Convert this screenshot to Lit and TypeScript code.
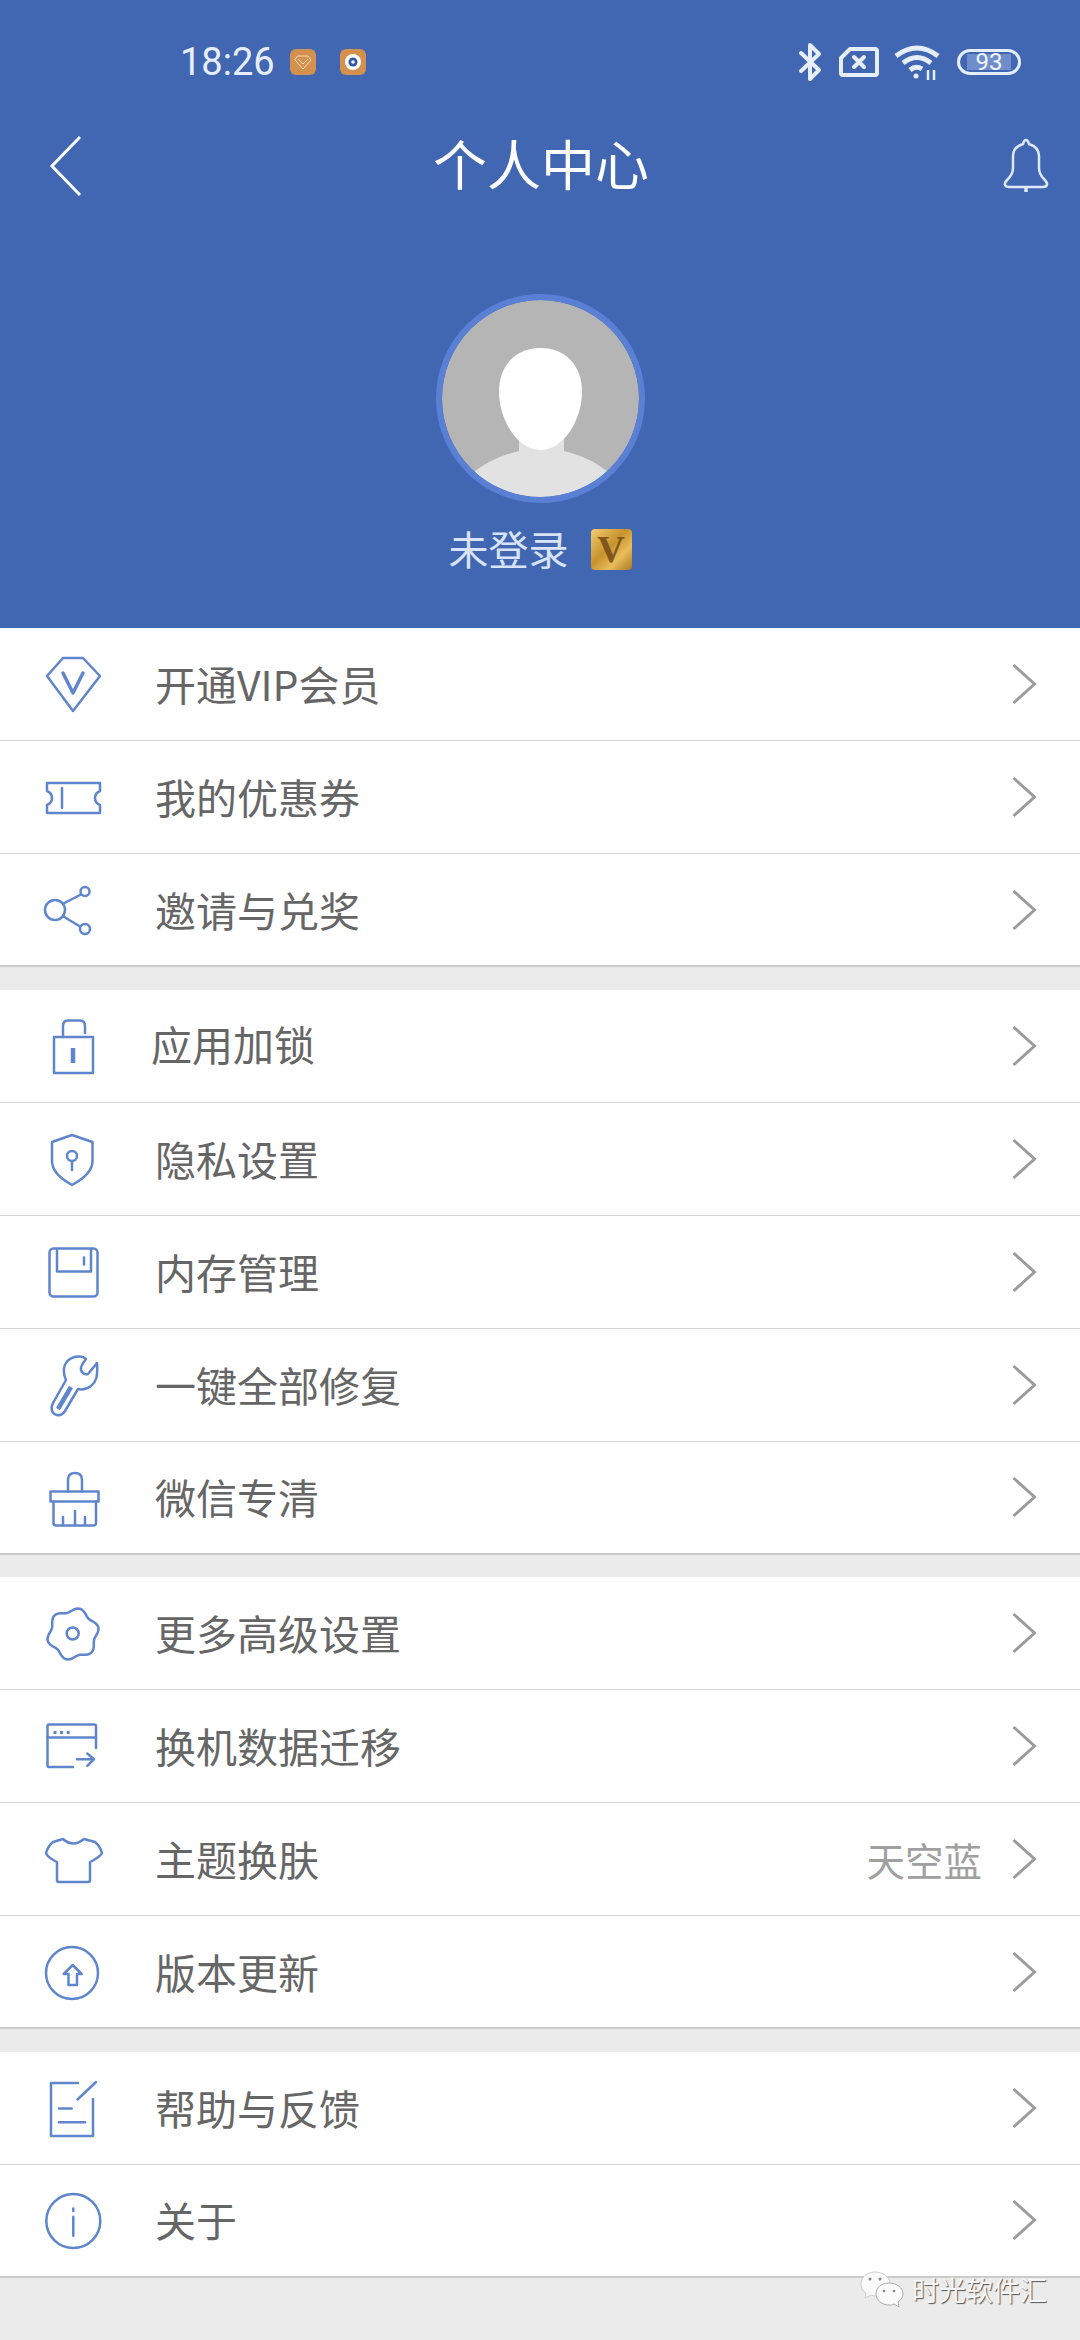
import { LitElement, css, html, svg } from 'lit';
import { customElement } from 'lit/decorators.js';

// six soft lobes, same outline as the app's "advanced settings" cog
function gearPath(): string {
  const pts: string[] = [];
  for (let deg = 0; deg < 360; deg += 5) {
    const a = (deg * Math.PI) / 180;
    const r = 24 + 2.2 * Math.cos(6 * (a + (75 * Math.PI) / 180));
    pts.push(`${(41 + r * Math.cos(a)).toFixed(1)} ${(41 + r * Math.sin(a)).toFixed(1)}`);
  }
  return `M${pts.join('L')}Z`;
}

const icons = {
  vip: svg`<path d="M31 14H51L68 32L41 67L15 32Z"/><path class="bold" d="M31 29L41 49L51 29"/>`,
  ticket: svg`<path d="M15 26H68V34Q63 36 63 41T68 48V56H15V48Q20 46 20 41T15 34Z"/><path d="M30 31V51"/>`,
  share: svg`<circle cx="23" cy="40" r="10"/><circle cx="53" cy="21.5" r="4.5"/><circle cx="53" cy="59" r="5"/><path d="M31.5 33.5L49 24.5M31.5 46.5L48 56.5"/>`,
  lock: svg`<path d="M22 31H61V67H22Z"/><path d="M31 31V20Q31 14.5 36 14.5H48Q53 14.5 53 20V27"/><path class="bar" d="M41 42V57"/>`,
  shield: svg`<path d="M40 16L60.5 23V42Q60.5 55 40 66Q20 55 20 42V23Z"/><circle cx="40" cy="37" r="5"/><path d="M40 42V51"/>`,
  disk: svg`<rect x="17.5" y="16.5" width="48" height="48" rx="4"/><path d="M25 17V39.5H59V17"/><path d="M52 25.5V32.5"/>`,
  wrench: svg`<path d="M48 11.5C38 11 31 18 32 27C32 31 33 33 34 35L21 58C18 64 20 69 25 70C29 71 31 69 33 66L46 44C50 45 55 44 59 41C64 37 66 32 65 18L56 29C53 30 50 28 49 25C48 22 50 19 54 14C52 12 50 11.5 48 11.5Z"/><path class="bar" d="M26 64L39 42"/>`,
  broom: svg`<path d="M36 34.5V23Q36 16 43 16Q50 16 50 23V34.5"/><path d="M18.5 34.5H66.5V44.5H18.5Z"/><path d="M21.5 44.5V66Q21.5 68.5 24 68.5H61.5Q64 68.5 64 66V44.5"/><path d="M31 60V68M43 54V68M53 60V68"/>`,
  gear: svg`<path d="${gearPath()}"/><circle cx="40.7" cy="40.5" r="6"/>`,
  migrate: svg`<path d="M41 61H17Q15.5 61 15.5 59.5V20Q15.5 18.5 17 18.5H62Q64 18.5 64 20V42"/><path d="M15.5 31.5H64"/><path class="dots" d="M21.5 26.5H38"/><path d="M45 53.2H62L55.3 47.5M62 53.2L55.3 59.8"/>`,
  shirt: svg`<path d="M31 20Q41 29 52 20L63 23Q68 27 70 34Q68 38 58 43V61Q58 63 56 63H27Q25 63 25 61V43Q15 38 14 34Q16 27 21 23Z"/>`,
  update: svg`<circle cx="40" cy="41" r="26"/><path d="M40.7 33L49.7 42H45V53H36.5V42H31.7Z"/>`,
  help: svg`<path d="M46 15H19V68H61V31"/><path d="M45.5 31.5L64 14M27 40.5H39.7M27 54.2H53"/>`,
  info: svg`<circle cx="41.3" cy="41" r="27"/><path d="M41.3 36.8V55.8M41.3 28.5V31"/>`,
};

type Row = { label: string; icon: keyof typeof icons; value?: string; tight?: boolean };

const groups: Row[][] = [
  [
    { label: '开通VIP会员', icon: 'vip' },
    { label: '我的优惠券', icon: 'ticket' },
    { label: '邀请与兑奖', icon: 'share' },
  ],
  [
    { label: '应用加锁', icon: 'lock', tight: true },
    { label: '隐私设置', icon: 'shield' },
    { label: '内存管理', icon: 'disk' },
    { label: '一键全部修复', icon: 'wrench' },
    { label: '微信专清', icon: 'broom' },
  ],
  [
    { label: '更多高级设置', icon: 'gear' },
    { label: '换机数据迁移', icon: 'migrate' },
    { label: '主题换肤', icon: 'shirt', value: '天空蓝' },
    { label: '版本更新', icon: 'update' },
  ],
  [
    { label: '帮助与反馈', icon: 'help' },
    { label: '关于', icon: 'info' },
  ],
];

@customElement('app-root')
export class AppRoot extends LitElement {
  static styles = css`
    :host {
      display: block;
      position: relative;
      width: 1080px;
      height: 2340px;
      overflow: hidden;
      background: #ebebeb;
      font-family: 'Noto Sans CJK SC', 'Noto Sans', sans-serif;
    }

    .header {
      height: 628px;
      box-sizing: border-box;
      background: #4267b2;
      display: flex;
      flex-direction: column;
      align-items: stretch;
      color: #fff;
    }

    .status {
      height: 40px;
      margin-top: 42px;
      padding: 0 59px 0 180px;
      display: flex;
      align-items: center;
      color: #e6eefc;
    }
    .time {
      font-family: Roboto, sans-serif;
      font-weight: 400;
      font-size: 38px;
      margin-right: 15px;
    }
    .app-badge {
      width: 26px;
      height: 26px;
      border-radius: 6px;
      background: #d4904f;
      margin-right: 24px;
    }
    .spacer {
      flex: 1;
    }
    .status svg {
      display: block;
      fill: none;
      stroke: #e6eefc;
      stroke-width: 4;
      stroke-linecap: round;
      stroke-linejoin: round;
    }
    .status .sim {
      margin-left: 16px;
    }
    .status .wifi {
      margin-left: 15px;
      stroke-width: 5;
      stroke-linecap: butt;
    }
    .battery {
      margin-left: 17px;
      width: 64px;
      height: 26px;
      box-sizing: border-box;
      border: 3px solid #e6eefc;
      border-radius: 13px;
      padding: 2px 7px;
      display: flex;
    }
    .level {
      flex: 1;
      background: #6f8dcc;
      display: flex;
      align-items: center;
      justify-content: center;
      font-family: Roboto, sans-serif;
      font-size: 24px;
      line-height: 16px;
      color: #f2f6ff;
    }

    .nav {
      height: 100px;
      margin-top: 34px;
      padding: 0 19px 0 21px;
      display: flex;
      align-items: center;
      justify-content: space-between;
    }
    .nav svg {
      display: block;
      fill: none;
      stroke: #fff;
      stroke-width: 3;
    }
    .nav .bell {
      stroke: #dfe8fa;
      stroke-width: 2.5;
    }
    .title {
      font-size: 54px;
      line-height: 100px;
      margin-bottom: 6px;
      color: #fff;
    }

    .avatar {
      display: block;
      align-self: center;
      margin-top: 78px;
    }
    .name {
      margin-top: 23px;
      height: 44px;
      display: flex;
      align-items: center;
      justify-content: center;
      gap: 22px;
      font-size: 40px;
      color: #d8e3f7;
    }
    .v-badge {
      width: 41px;
      height: 41px;
      border-radius: 4px;
      margin-top: 2px;
      background: linear-gradient(135deg, #f0cc72 0%, #c8922c 45%, #e8bd5c 70%, #a87720 100%);
      display: flex;
      align-items: center;
      justify-content: center;
      font-family: 'Liberation Serif', serif;
      font-weight: 700;
      font-size: 38px;
      line-height: 41px;
      color: #80571a;
    }

    .group {
      background: #fff;
      margin-bottom: 22.5px;
    }
    .row {
      height: 113px;
      box-sizing: border-box;
      border-bottom: 1.5px solid #d4d4d4;
      padding: 0 41px 0 32px;
      display: flex;
      align-items: center;
    }
    .row:last-child {
      border-bottom: 2px solid #cbcbcb;
    }
    .icon {
      flex: none;
      fill: none;
      stroke: #5f86cc;
      stroke-width: 2.5;
      stroke-linecap: round;
      stroke-linejoin: round;
    }
    .icon .bold {
      stroke-width: 3.5;
    }
    .icon .bar {
      stroke-width: 4.5;
      stroke-linecap: butt;
    }
    .icon .dots {
      stroke-width: 3;
      stroke-dasharray: 3 3.6;
      stroke-linecap: butt;
    }
    .label {
      flex: 1;
      margin-left: 43px;
      margin-bottom: 2px;
      font-size: 41px;
      line-height: 56px;
      color: #666;
    }
    .label.tight {
      margin-left: 39px;
      margin-bottom: 6px;
    }
    .value {
      font-size: 38.5px;
      line-height: 56px;
      color: #a0a0a0;
      margin-right: 27px;
    }
    .chevron {
      flex: none;
      fill: none;
      stroke: #9c9c9c;
      stroke-width: 3;
    }

    .watermark {
      position: absolute;
      left: 860px;
      top: 2271px;
      display: flex;
      align-items: center;
      gap: 8px;
      font-size: 27px;
      line-height: 38px;
      color: #f6f6f6;
      text-shadow: 1px 1px 1px #555;
    }
  `;

  private renderRow(row: Row) {
    return html`
      <div class="row">
        <svg class="icon" width="80" height="80" viewBox="0 0 80 80">${icons[row.icon]}</svg>
        <div class="label ${row.tight ? 'tight' : ''}">${row.label}</div>
        ${row.value ? html`<div class="value">${row.value}</div>` : ''}
        <svg class="chevron" width="30" height="44" viewBox="0 0 30 44"><path d="M4.5 3L25.5 22L4.5 41"/></svg>
      </div>
    `;
  }

  render() {
    return html`
      <div class="header">
        <div class="status">
          <div class="time">18:26</div>
          <svg class="app-badge" viewBox="0 0 26 26" style="stroke:#f6dcb8;stroke-width:1">
            <path d="M8 7H18L21 11L13 20L5 11ZM8.5 10.5L13 15L17.5 10.5"/>
          </svg>
          <svg class="app-badge" viewBox="0 0 26 26" style="stroke:none">
            <circle cx="13" cy="13" r="8" fill="#fff"/>
            <circle cx="13" cy="13" r="4.5" fill="#2f5aa8"/>
            <circle cx="13" cy="13" r="1.8" fill="#fff"/>
          </svg>
          <div class="spacer"></div>
          <svg width="25" height="40" viewBox="0 0 25 40">
            <path d="M3 11L21 28L12 37V3L21 12L3 29"/>
          </svg>
          <svg class="sim" width="40" height="30" viewBox="0 0 40 30">
            <path d="M11 2H36Q38 2 38 4V26Q38 28 36 28H4Q2 28 2 26V11Z"/>
            <path d="M15 10L25 20M25 10L15 20"/>
          </svg>
          <svg class="wifi" width="46" height="36" viewBox="0 0 46 36">
            <path d="M2 12Q23 -4 44 12M9 19Q23 8 37 19M16 26Q22 21 28 25"/>
            <circle cx="22" cy="32" r="2.5" fill="#e6eefc" stroke="none"/>
            <path style="stroke-width:2.5" d="M34 26V36M40 26V36"/>
          </svg>
          <div class="battery"><div class="level">93</div></div>
        </div>

        <div class="nav">
          <svg width="60" height="60" viewBox="0 0 60 60"><path d="M59 1L31 30L59 59"/></svg>
          <div class="title">个人中心</div>
          <svg class="bell" width="60" height="60" viewBox="0 0 60 60">
            <path d="M7 43Q3 47 4 49Q5 51 8 51H42Q46 51 46 48Q46 46 43 43Q38 38 38 32V20Q38 11 28 8Q27 4 25 4Q23 4 22 8Q12 11 12 20V32Q12 38 7 43Z"/>
            <path d="M25 52V56" stroke-width="3.5"/>
          </svg>
        </div>

        <svg class="avatar" width="209" height="209" viewBox="0 0 209 209">
          <defs><clipPath id="face"><circle cx="104.5" cy="104.5" r="98.5"/></clipPath></defs>
          <circle cx="104.5" cy="104.5" r="98.5" fill="#b5b5b5"/>
          <g clip-path="url(#face)">
            <path fill="#e2e2e2" d="M30 185C50 166 68 161 83 157V130H128V157C143 161 160 166 180 185V209H30Z"/>
            <path fill="#fff" d="M104.5 54C130 54 146 72 146 98C146 125 128 156 104.5 156C81 156 63 125 63 98C63 72 79 54 104.5 54Z"/>
          </g>
          <circle cx="104.5" cy="104.5" r="101.5" fill="none" stroke="#5a80d6" stroke-width="6"/>
        </svg>

        <div class="name">
          <span>未登录</span>
          <div class="v-badge">V</div>
        </div>
      </div>

      ${groups.map((g) => html`<div class="group">${g.map((r) => this.renderRow(r))}</div>`)}

      <div class="watermark">
        <svg width="44" height="38" viewBox="0 0 44 38">
          <path fill="#fafafa" stroke="#bbb" stroke-width="0.7" d="M15 1C7 1 1 6 1 13C1 17 3 20 6 22L5 27L11 24C14 25 16 25 18 25C25 25 30 19 30 13C30 6 23 1 15 1Z"/>
          <path fill="#fafafa" stroke="#999" stroke-width="0.8" d="M29 12C21 12 16 17 16 23C16 29 22 34 29 34C31 34 32 34 34 33L39 36L38 31C41 29 43 26 43 23C43 17 37 12 29 12Z"/>
          <circle cx="10" cy="8" r="1.5" fill="#888"/><circle cx="20" cy="8" r="1.5" fill="#888"/>
          <circle cx="24" cy="20" r="1.3" fill="#888"/><circle cx="34" cy="20" r="1.3" fill="#888"/>
        </svg>
        <span>时光软件汇</span>
      </div>
    `;
  }
}
